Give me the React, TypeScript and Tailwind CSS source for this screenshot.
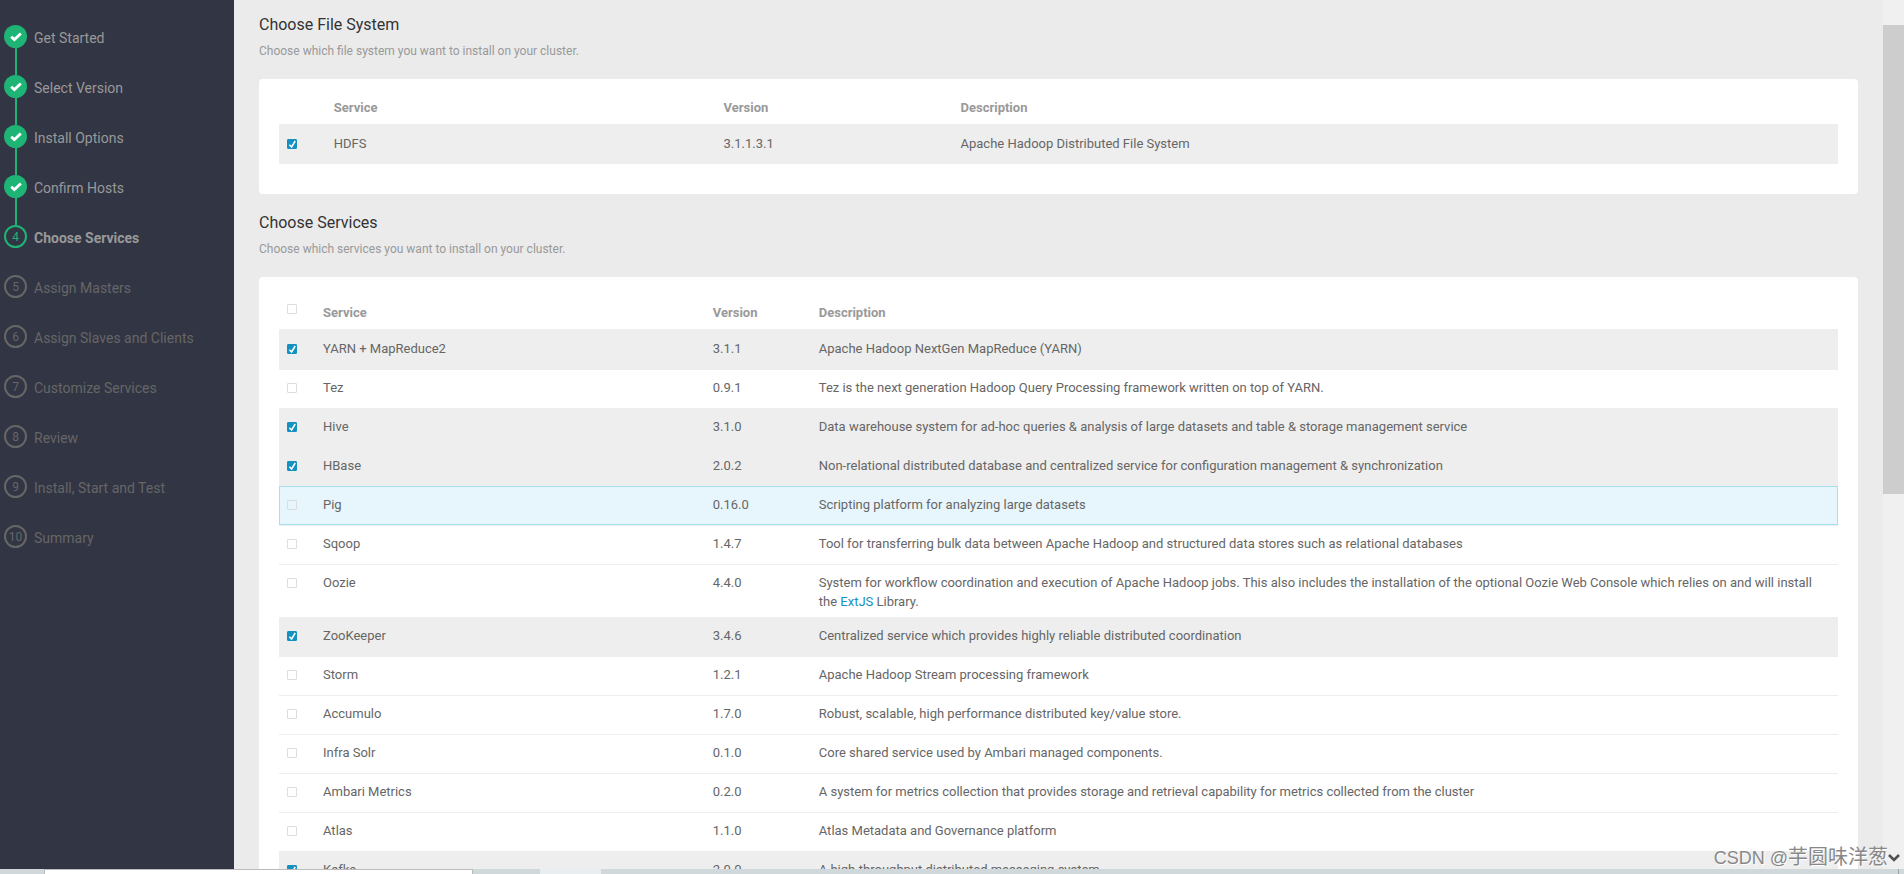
import React, { ReactNode, useState } from "react";

type Step = {
  label: string;
  state: "done" | "active" | "pending";
};

type Service = {
  name: string;
  version: string;
  description: ReactNode;
  checked?: boolean;
  hovered?: boolean;
};

const steps: Step[] = [
  { label: "Get Started", state: "done" },
  { label: "Select Version", state: "done" },
  { label: "Install Options", state: "done" },
  { label: "Confirm Hosts", state: "done" },
  { label: "Choose Services", state: "active" },
  { label: "Assign Masters", state: "pending" },
  { label: "Assign Slaves and Clients", state: "pending" },
  { label: "Customize Services", state: "pending" },
  { label: "Review", state: "pending" },
  { label: "Install, Start and Test", state: "pending" },
  { label: "Summary", state: "pending" },
];

const fileSystems: Service[] = [
  { name: "HDFS", version: "3.1.1.3.1", description: "Apache Hadoop Distributed File System", checked: true },
];

const services: Service[] = [
  { name: "YARN + MapReduce2", version: "3.1.1", description: "Apache Hadoop NextGen MapReduce (YARN)", checked: true },
  { name: "Tez", version: "0.9.1", description: "Tez is the next generation Hadoop Query Processing framework written on top of YARN." },
  { name: "Hive", version: "3.1.0", description: "Data warehouse system for ad-hoc queries & analysis of large datasets and table & storage management service", checked: true },
  { name: "HBase", version: "2.0.2", description: "Non-relational distributed database and centralized service for configuration management & synchronization", checked: true },
  { name: "Pig", version: "0.16.0", description: "Scripting platform for analyzing large datasets", hovered: true },
  { name: "Sqoop", version: "1.4.7", description: "Tool for transferring bulk data between Apache Hadoop and structured data stores such as relational databases" },
  {
    name: "Oozie",
    version: "4.4.0",
    description: (
      <>
        System for workflow coordination and execution of Apache Hadoop jobs. This also includes the installation of the optional Oozie Web Console which relies on and will install the{" "}
        <a href="#extjs" className="text-[#1491c1]">ExtJS</a> Library.
      </>
    ),
  },
  { name: "ZooKeeper", version: "3.4.6", description: "Centralized service which provides highly reliable distributed coordination", checked: true },
  { name: "Storm", version: "1.2.1", description: "Apache Hadoop Stream processing framework" },
  { name: "Accumulo", version: "1.7.0", description: "Robust, scalable, high performance distributed key/value store." },
  { name: "Infra Solr", version: "0.1.0", description: "Core shared service used by Ambari managed components." },
  { name: "Ambari Metrics", version: "0.2.0", description: "A system for metrics collection that provides storage and retrieval capability for metrics collected from the cluster" },
  { name: "Atlas", version: "1.1.0", description: "Atlas Metadata and Governance platform" },
  { name: "Kafka", version: "2.0.0", description: "A high-throughput distributed messaging system", checked: true },
];

const StepBadge = ({ step, index }: { step: Step; index: number }) => {
  if (step.state === "done") {
    return (
      <span className="flex size-[23px] items-center justify-center rounded-full bg-[#1eb475]">
        <svg viewBox="0 0 12 10" className="h-2.5 w-3">
          <path d="M1.2 4.8 4.4 7.6 10.8 1.6" fill="none" stroke="#fff" strokeWidth="2.8" />
        </svg>
      </span>
    );
  }
  return (
    <span
      className={`flex size-[23px] items-center justify-center rounded-full border-2 text-xs ${
        step.state === "active" ? "border-[#1eb475] text-[#1eb475]" : "border-[#666] text-[#666]"
      }`}
    >
      {index}
    </span>
  );
};

const Sidebar = () => (
  <nav className="w-[234px] shrink-0 bg-[#323544] pl-1 pt-[25px]">
    <ol>
      {steps.map((step, i) => (
        <li key={step.label} className="flex h-[50px] gap-[7px]">
          <div className="flex flex-col items-center">
            <StepBadge step={step} index={i} />
            {step.state === "done" && <span className="w-0.5 grow bg-[#1eb475]" />}
          </div>
          <a
            href="#step"
            className={`pt-0.5 text-sm leading-[22px] ${
              step.state === "pending" ? "text-[#666]" : "text-[#999]"
            } ${step.state === "active" ? "font-bold" : ""}`}
          >
            {step.label}
          </a>
        </li>
      ))}
    </ol>
  </nav>
);

const Checkbox = ({ label, defaultChecked = false }: { label: string; defaultChecked?: boolean }) => {
  const [checked, setChecked] = useState(defaultChecked);
  return (
    <label className="grid size-2.5">
      <input
        type="checkbox"
        aria-label={label}
        checked={checked}
        onChange={(e) => setChecked(e.target.checked)}
        className="col-start-1 row-start-1 size-2.5 appearance-none rounded-[1px] border border-[#ddd] checked:border-[#1491c1] checked:bg-[#1491c1]"
      />
      {checked && (
        <svg viewBox="0 0 10 10" className="pointer-events-none col-start-1 row-start-1 size-2.5">
          <path d="M2.4 5.8 4.6 8 8.2 2" fill="none" stroke="#fff" strokeWidth="1.5" />
        </svg>
      )}
    </label>
  );
};

type TableProps = {
  rows: Service[];
  columns: ReactNode;
  headClass: string;
  selectAll?: boolean;
};

const ServiceTable = ({ rows, columns, headClass, selectAll }: TableProps) => (
  <table className="w-full table-fixed text-left text-[13px] leading-[19px] text-[#666]">
    <colgroup>{columns}</colgroup>
    <thead>
      <tr className={`border-b-2 border-[#eee] align-bottom text-[#999] ${headClass}`}>
        <th className="px-2 pt-0.5 align-middle">{selectAll && <Checkbox label="Select all services" />}</th>
        <th className="px-2 pb-[7px]">Service</th>
        <th className="px-2 pb-[7px]">Version</th>
        <th className="px-2 pb-[7px]">Description</th>
      </tr>
    </thead>
    <tbody>
      {rows.map((row) => (
        <tr
          key={row.name}
          className={`h-[39px] border-t border-[#eee] align-top ${row.checked ? "bg-[#eee]" : ""} ${
            row.hovered ? "bg-[#e7f6fc] outline -outline-offset-1 outline-[#a7dff2]" : ""
          }`}
        >
          <td className="px-2 pt-[13px]">
            <Checkbox label={row.name} defaultChecked={row.checked} />
          </td>
          <td className="px-2 pt-2 pb-1.5">{row.name}</td>
          <td className="px-2 pt-2 pb-1.5">{row.version}</td>
          <td className="px-2 pt-2 pb-1.5">{row.description}</td>
        </tr>
      ))}
    </tbody>
  </table>
);

const Section = ({ title, hint, children }: { title: string; hint: string; children: ReactNode }) => (
  <section>
    <h2 className="text-base leading-[26px] text-[#333]">{title}</h2>
    <p className="mt-0.5 mb-4 text-xs leading-[23px] text-[#999]">{hint}</p>
    <div className="rounded bg-white px-5 pt-2.5 pb-[30px]">{children}</div>
  </section>
);

const Scrollbar = () => (
  <div className="flex w-[21px] shrink-0 flex-col items-center bg-[#f0f0f0] pt-[25px] pb-1.5">
    <div className="h-[56%] w-full bg-[#cdcdcd]" />
    <svg viewBox="0 0 12 10" className="mt-auto h-2.5 w-3">
      <path d="M1 2 6 7 11 2" fill="none" stroke="#505050" strokeWidth="2.6" />
    </svg>
  </div>
);

// sliver of the desktop visible under the browser window
const Taskbar = () => (
  <div className="flex h-[5px] shrink-0 bg-[#d0d8db]">
    <div className="ml-[44px] w-[429px] border-x border-t border-[#bbb] bg-white" />
    <div className="ml-[67px] w-[61px] bg-[#e9eef1]" />
    <div className="mr-[5px] ml-auto w-px bg-[#9aa3a7]" />
  </div>
);

const App = () => {
  return (
    <div className="relative flex h-screen flex-col overflow-hidden bg-[#ebebeb] font-[Roboto,'Liberation_Sans',sans-serif]">
      <div className="flex min-h-0 grow">
        <Sidebar />
        <main className="flex min-w-0 grow flex-col gap-4 overflow-hidden px-[25px] pt-3">
          <Section title="Choose File System" hint="Choose which file system you want to install on your cluster.">
            <ServiceTable
              rows={fileSystems}
              headClass="h-9"
              columns={
                <>
                  <col className="w-[3%]" />
                  <col className="w-1/4" />
                  <col className="w-[237px]" />
                  <col />
                </>
              }
            />
          </Section>
          <Section title="Choose Services" hint="Choose which services you want to install on your cluster.">
            <ServiceTable
              rows={services}
              headClass="h-[43px]"
              selectAll
              columns={
                <>
                  <col className="w-9" />
                  <col className="w-1/4" />
                  <col className="w-[106px]" />
                  <col />
                </>
              }
            />
          </Section>
        </main>
        <Scrollbar />
      </div>
      <Taskbar />
      <div className="pointer-events-none absolute right-4 bottom-0.5 font-['Liberation_Sans','Noto_Sans_CJK_SC',sans-serif] text-xl leading-[30px] text-[#888] [text-shadow:1px_1px_1px_#fff]">
        <span className="text-lg">CSDN @</span>芋圆味洋葱
      </div>
    </div>
  );
};

export default App;
